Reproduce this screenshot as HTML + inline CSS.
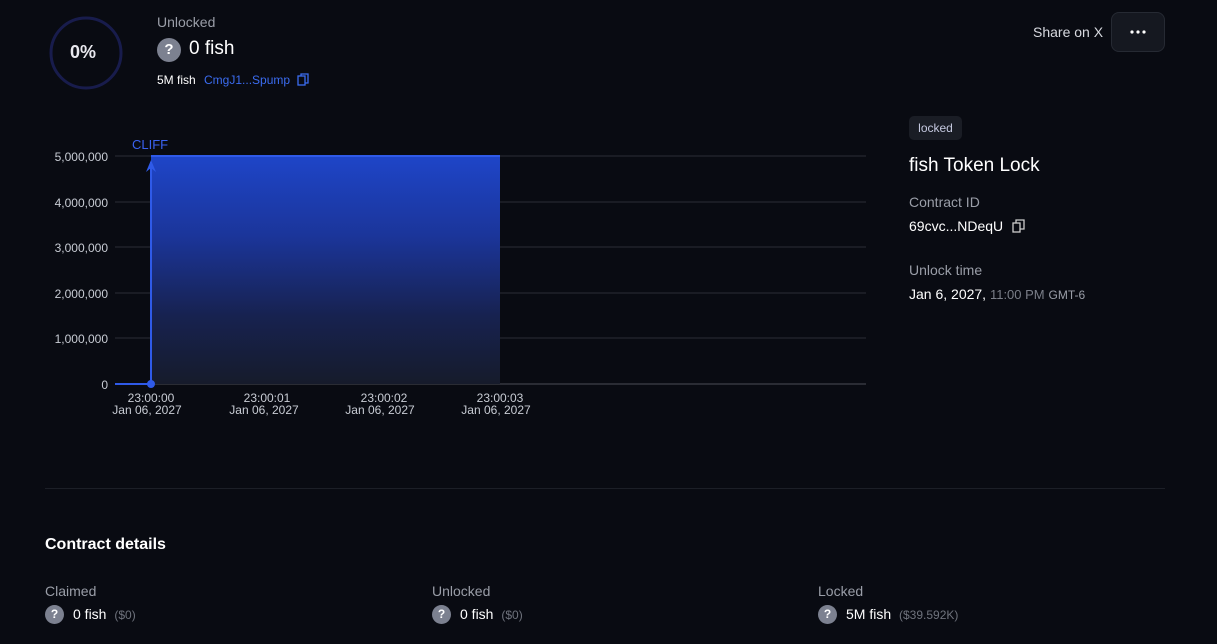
<!DOCTYPE html>
<html><head><meta charset="utf-8"><style>
*{margin:0;padding:0;box-sizing:border-box}
body{width:1217px;height:644px;background:#090b12;font-family:"Liberation Sans",sans-serif;color:#fff;position:relative;overflow:hidden}
.a{position:absolute;white-space:nowrap}
.g{color:#9a9ea8}
.q{display:inline-block;border-radius:50%;background:#7c8190;color:#fff;text-align:center;font-weight:bold}
</style></head><body>
<svg class="a" style="left:48px;top:15px" width="76" height="76"><circle cx="38" cy="38" r="35" fill="none" stroke="#181c4c" stroke-width="3"/></svg>
<div class="a" style="left:70px;top:42px;font-size:18px;font-weight:bold;color:#e8e8ee">0%</div>
<div class="a g" style="left:157px;top:14px;font-size:14px">Unlocked</div>
<div class="a q" style="left:157px;top:38px;width:24px;height:24px;font-size:15px;line-height:24px">?</div>
<div class="a" style="left:189px;top:38px;font-size:19px">0 fish</div>
<div class="a" style="left:157px;top:73px;font-size:12px">5M fish <span style="color:#3b6cf0;margin-left:5px">CmgJ1...Spump</span></div>
<svg class="a" style="left:297px;top:73px" width="12" height="13"><rect x="1" y="3" width="7" height="9" fill="none" stroke="#3b6cf0" stroke-width="1.3"/><path d="M4 3V1h7v9H8" fill="none" stroke="#3b6cf0" stroke-width="1.3"/></svg>

<div class="a" style="left:1033px;top:24px;font-size:14px;color:#d8dae0">Share on X</div>
<div class="a" style="left:1111px;top:12px;width:54px;height:40px;border:1px solid #262a33;background:#151820;border-radius:8px"></div>
<svg class="a" style="left:1129px;top:29px" width="18" height="6"><circle cx="3" cy="3" r="1.6" fill="#fff"/><circle cx="9" cy="3" r="1.6" fill="#fff"/><circle cx="15" cy="3" r="1.6" fill="#fff"/></svg>

<div class="a" style="left:909px;top:116px;width:53px;height:24px;background:#1a1d25;border-radius:5px;font-size:12px;line-height:24px;text-align:center;color:#c5c9e0">locked</div>
<div class="a" style="left:909px;top:155px;font-size:19px">fish Token Lock</div>
<div class="a g" style="left:909px;top:194px;font-size:14px">Contract ID</div>
<div class="a" style="left:909px;top:218px;font-size:14px">69cvc...NDeqU</div>
<svg class="a" style="left:1012px;top:219px" width="13" height="14"><rect x="1" y="4" width="7" height="9" fill="none" stroke="#ccc" stroke-width="1.3"/><path d="M4 4V1h8v9H8" fill="none" stroke="#ccc" stroke-width="1.3"/></svg>
<div class="a g" style="left:909px;top:262px;font-size:14px">Unlock time</div>
<div class="a" style="left:909px;top:286px;font-size:14px">Jan 6, 2027, <span style="color:#7a7e88;font-size:13px">11:00 PM</span> <span style="color:#9a9ea8;font-size:12px">GMT-6</span></div>

<svg class="a" style="left:0;top:130px" width="880" height="300">
<defs><linearGradient id="gr" x1="0" y1="0" x2="0" y2="1"><stop offset="0" stop-color="#1e45c8"/><stop offset="0.35" stop-color="#1b359a"/><stop offset="0.7" stop-color="#172250"/><stop offset="1" stop-color="#161b2b"/></linearGradient></defs>
<g stroke="#2a2d36" stroke-width="1"><line x1="115" y1="26" x2="866" y2="26"/><line x1="115" y1="72" x2="866" y2="72"/><line x1="115" y1="117" x2="866" y2="117"/><line x1="115" y1="163" x2="866" y2="163"/><line x1="115" y1="208" x2="866" y2="208"/><line x1="115" y1="254" x2="866" y2="254" stroke="#4a4d56"/></g>
<rect x="151" y="26" width="349" height="228" fill="url(#gr)"/>
<line x1="151" y1="26" x2="500" y2="26" stroke="#2f5ae8" stroke-width="2"/>
<line x1="115" y1="254" x2="151" y2="254" stroke="#2f5ae8" stroke-width="2"/>
<line x1="151" y1="254" x2="151" y2="32" stroke="#2f5ae8" stroke-width="2"/>
<path d="M146 42L151 30L156 42L151 38Z" fill="#2f5ae8"/>
<circle cx="151" cy="254" r="4" fill="#2f5ae8"/>
<text x="132" y="19" fill="#3a62f0" font-size="13" font-family="Liberation Sans">CLIFF</text>
<g font-size="12" fill="#c8ccd4" font-family="Liberation Sans" text-anchor="end"><text x="108" y="31">5,000,000</text><text x="108" y="77">4,000,000</text><text x="108" y="122">3,000,000</text><text x="108" y="168">2,000,000</text><text x="108" y="213">1,000,000</text><text x="108" y="259">0</text></g>
<g font-size="12" fill="#c8ccd4" font-family="Liberation Sans" text-anchor="middle"><text x="151" y="272">23:00:00</text><text x="147" y="284">Jan 06, 2027</text><text x="267" y="272">23:00:01</text><text x="264" y="284">Jan 06, 2027</text><text x="384" y="272">23:00:02</text><text x="380" y="284">Jan 06, 2027</text><text x="500" y="272">23:00:03</text><text x="496" y="284">Jan 06, 2027</text></g>
</svg>

<div class="a" style="left:45px;top:488px;width:1120px;height:1px;background:#1c1f27"></div>
<div class="a" style="left:45px;top:536px;font-size:16px;font-weight:bold">Contract details</div>
<div class="a g" style="left:45px;top:583px;font-size:14px">Claimed</div>
<div class="a q" style="left:45px;top:605px;width:19px;height:19px;font-size:12px;line-height:19px">?</div>
<div class="a" style="left:73px;top:606px;font-size:14px">0 fish <span style="color:#6f737d;font-size:12px;margin-left:4px">($0)</span></div>
<div class="a g" style="left:432px;top:583px;font-size:14px">Unlocked</div>
<div class="a q" style="left:432px;top:605px;width:19px;height:19px;font-size:12px;line-height:19px">?</div>
<div class="a" style="left:460px;top:606px;font-size:14px">0 fish <span style="color:#6f737d;font-size:12px;margin-left:4px">($0)</span></div>
<div class="a g" style="left:818px;top:583px;font-size:14px">Locked</div>
<div class="a q" style="left:818px;top:605px;width:19px;height:19px;font-size:12px;line-height:19px">?</div>
<div class="a" style="left:846px;top:606px;font-size:14px">5M fish <span style="color:#6f737d;font-size:12px;margin-left:4px">($39.592K)</span></div>
</body></html>
